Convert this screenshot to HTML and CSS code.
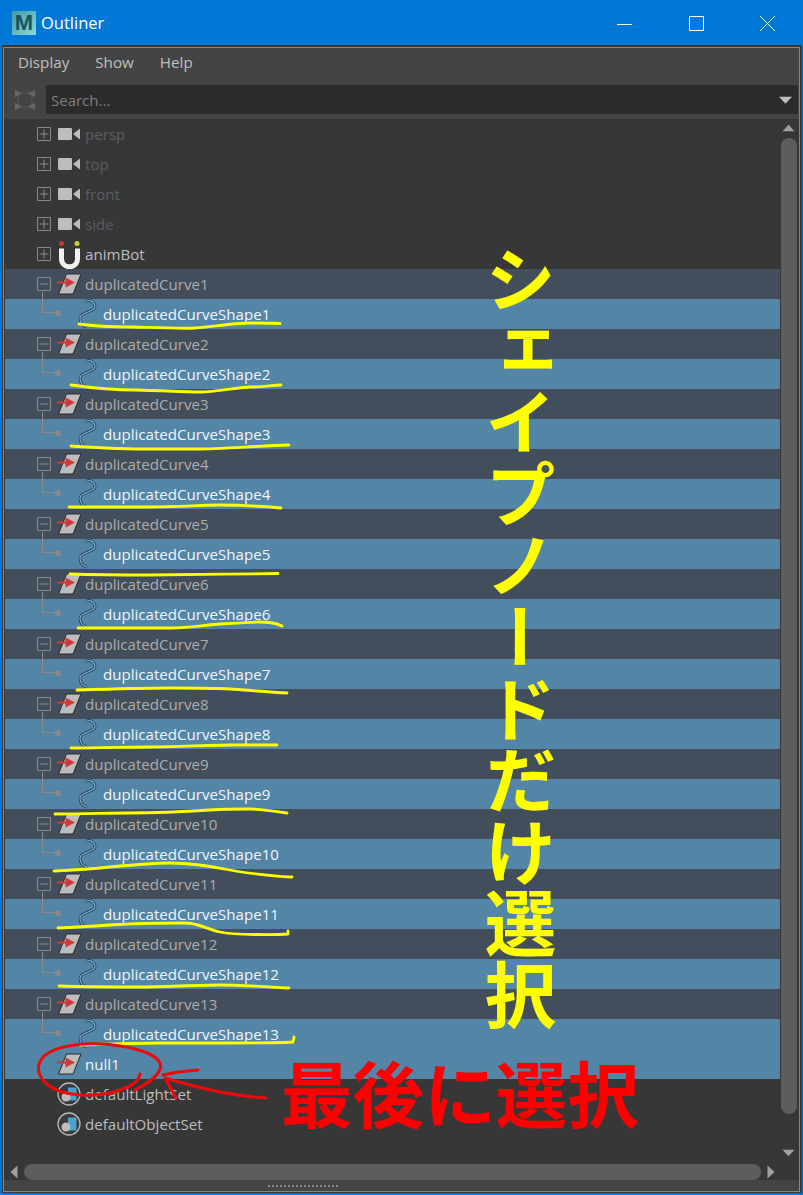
FILE: index.html
```html
<!DOCTYPE html>
<html lang="ja">
<head>
<meta charset="utf-8">
<title>Outliner</title>
<link rel="stylesheet" href="styles.css">
</head>
<body>
<svg class="defs" width="0" height="0" aria-hidden="true">
  <symbol id="i-plus" viewBox="0 0 14 14"><path d="M.5.5h13v13H.5zM2.5 7h9M7 2.5v9" fill="none" stroke="#8a8a8a"/></symbol>
  <symbol id="i-minus" viewBox="0 0 14 14"><path d="M.5.5h13v13H.5zM2.5 7h9" fill="none" stroke="#8a8a8a"/></symbol>
  <symbol id="i-camera" viewBox="0 0 24 14"><rect x="1" y="1" width="14" height="12" rx="1.2" fill="#bdbdbd"/><path d="M16 7 23 1.5v11z" fill="#bdbdbd"/></symbol>
  <symbol id="i-magnet" viewBox="0 0 24 30"><path d="M4.500 9.500v10c0 11 16 11 16 0v-10" fill="none" stroke="#f2f2f2" stroke-width="5"/><circle cx="4.500" cy="4.500" r="2.500" fill="#c9333b"/><circle cx="20" cy="4.500" r="2.500" fill="#c8d43a"/></symbol>
  <symbol id="i-transform" viewBox="0 0 26 22"><path d="M10.500 1H25l-8 20H2.500z" fill="#bcbcbc" stroke="#2a2a2a"/><path d="M1 9.500h11" stroke="#d23838" stroke-width="2.200"/><path d="M9.500 4.500l9.500 5-9.500 5z" fill="#d23838"/></symbol>
  <symbol id="i-curve" viewBox="0 0 20 30"><g fill="none"><path d="M8 3C10 0 17 2 17 8 17 13 2 13 2 19c0 5 3 8 7 9" stroke="#2a4257" stroke-width="2.800"/><path d="M8 3C10 0 17 2 17 8 17 13 2 13 2 19c0 5 3 8 7 9" stroke="#7fb6d4" stroke-width="1.100"/></g></symbol>
  <symbol id="i-set" viewBox="0 0 24 24"><circle cx="12" cy="12" r="11" fill="#3a3a3a" stroke="#b8b8b8" stroke-width="1.300"/><path d="M11 5.500h8.500v13H11z" fill="#4ba3c9"/><circle cx="9" cy="15" r="4.500" fill="#bdbdbd"/></symbol>
</svg>

<div class="window">
  <header class="titlebar">
    <span class="logo">M</span>
    <span class="title">Outliner</span>
    <div class="controls">
      <svg class="ctl" viewBox="0 0 20 20"><path d="M2 11.500h15" stroke="#fff" fill="none"/></svg>
      <svg class="ctl" viewBox="0 0 20 20"><path d="M3.500 3.500h14v14h-14z" stroke="#fff" fill="none"/></svg>
      <svg class="ctl" viewBox="0 0 20 20"><path d="M3 3l15 15M18 3L3 18" stroke="#fff" fill="none"/></svg>
    </div>
  </header>

  <div class="frame">
    <div class="panel">
      <nav class="menubar">
        <span class="menu-item">Display</span>
        <span class="menu-item">Show</span>
        <span class="menu-item">Help</span>
      </nav>
      <div class="searchbar">
        <svg class="filter-icon" viewBox="0 0 22 22">
          <path d="M4 4h14v14H4z" fill="none" stroke="#666" stroke-dasharray="2 1.500"/>
          <path d="M1 1v7l7-3.500zM21 1l-7 3.500 7 3.500zM1 21v-7l7 3.500zM21 21l-7-3.500 7-3.500z" fill="#666"/>
        </svg>
        <div class="search-field">
          <span class="search-hint">Search...</span>
          <svg class="search-arrow" viewBox="0 0 16 10"><path d="M1 1.500h14L8 9z" fill="#bdbdbd"/></svg>
        </div>
      </div>

      <div class="list-area">
        <div class="rows">
          <div class="row"><svg class="toggle"><use href="#i-plus"/></svg><svg class="icon icon-cam"><use href="#i-camera"/></svg><span class="label dim">persp</span></div>
          <div class="row"><svg class="toggle"><use href="#i-plus"/></svg><svg class="icon icon-cam"><use href="#i-camera"/></svg><span class="label dim">top</span></div>
          <div class="row"><svg class="toggle"><use href="#i-plus"/></svg><svg class="icon icon-cam"><use href="#i-camera"/></svg><span class="label dim">front</span></div>
          <div class="row"><svg class="toggle"><use href="#i-plus"/></svg><svg class="icon icon-cam"><use href="#i-camera"/></svg><span class="label dim">side</span></div>
          <div class="row"><svg class="toggle"><use href="#i-plus"/></svg><svg class="icon icon-tall"><use href="#i-magnet"/></svg><span class="label">animBot</span></div>

          <div class="row parent"><svg class="toggle"><use href="#i-minus"/></svg><svg class="icon icon-xf"><use href="#i-transform"/></svg><span class="label">duplicatedCurve1</span></div>
          <div class="row child"><i class="branch"></i><svg class="icon-curve"><use href="#i-curve"/></svg><span class="label">duplicatedCurveShape1</span></div>
          <div class="row parent"><svg class="toggle"><use href="#i-minus"/></svg><svg class="icon icon-xf"><use href="#i-transform"/></svg><span class="label">duplicatedCurve2</span></div>
          <div class="row child"><i class="branch"></i><svg class="icon-curve"><use href="#i-curve"/></svg><span class="label">duplicatedCurveShape2</span></div>
          <div class="row parent"><svg class="toggle"><use href="#i-minus"/></svg><svg class="icon icon-xf"><use href="#i-transform"/></svg><span class="label">duplicatedCurve3</span></div>
          <div class="row child"><i class="branch"></i><svg class="icon-curve"><use href="#i-curve"/></svg><span class="label">duplicatedCurveShape3</span></div>
          <div class="row parent"><svg class="toggle"><use href="#i-minus"/></svg><svg class="icon icon-xf"><use href="#i-transform"/></svg><span class="label">duplicatedCurve4</span></div>
          <div class="row child"><i class="branch"></i><svg class="icon-curve"><use href="#i-curve"/></svg><span class="label">duplicatedCurveShape4</span></div>
          <div class="row parent"><svg class="toggle"><use href="#i-minus"/></svg><svg class="icon icon-xf"><use href="#i-transform"/></svg><span class="label">duplicatedCurve5</span></div>
          <div class="row child"><i class="branch"></i><svg class="icon-curve"><use href="#i-curve"/></svg><span class="label">duplicatedCurveShape5</span></div>
          <div class="row parent"><svg class="toggle"><use href="#i-minus"/></svg><svg class="icon icon-xf"><use href="#i-transform"/></svg><span class="label">duplicatedCurve6</span></div>
          <div class="row child"><i class="branch"></i><svg class="icon-curve"><use href="#i-curve"/></svg><span class="label">duplicatedCurveShape6</span></div>
          <div class="row parent"><svg class="toggle"><use href="#i-minus"/></svg><svg class="icon icon-xf"><use href="#i-transform"/></svg><span class="label">duplicatedCurve7</span></div>
          <div class="row child"><i class="branch"></i><svg class="icon-curve"><use href="#i-curve"/></svg><span class="label">duplicatedCurveShape7</span></div>
          <div class="row parent"><svg class="toggle"><use href="#i-minus"/></svg><svg class="icon icon-xf"><use href="#i-transform"/></svg><span class="label">duplicatedCurve8</span></div>
          <div class="row child"><i class="branch"></i><svg class="icon-curve"><use href="#i-curve"/></svg><span class="label">duplicatedCurveShape8</span></div>
          <div class="row parent"><svg class="toggle"><use href="#i-minus"/></svg><svg class="icon icon-xf"><use href="#i-transform"/></svg><span class="label">duplicatedCurve9</span></div>
          <div class="row child"><i class="branch"></i><svg class="icon-curve"><use href="#i-curve"/></svg><span class="label">duplicatedCurveShape9</span></div>
          <div class="row parent"><svg class="toggle"><use href="#i-minus"/></svg><svg class="icon icon-xf"><use href="#i-transform"/></svg><span class="label">duplicatedCurve10</span></div>
          <div class="row child"><i class="branch"></i><svg class="icon-curve"><use href="#i-curve"/></svg><span class="label">duplicatedCurveShape10</span></div>
          <div class="row parent"><svg class="toggle"><use href="#i-minus"/></svg><svg class="icon icon-xf"><use href="#i-transform"/></svg><span class="label">duplicatedCurve11</span></div>
          <div class="row child"><i class="branch"></i><svg class="icon-curve"><use href="#i-curve"/></svg><span class="label">duplicatedCurveShape11</span></div>
          <div class="row parent"><svg class="toggle"><use href="#i-minus"/></svg><svg class="icon icon-xf"><use href="#i-transform"/></svg><span class="label">duplicatedCurve12</span></div>
          <div class="row child"><i class="branch"></i><svg class="icon-curve"><use href="#i-curve"/></svg><span class="label">duplicatedCurveShape12</span></div>
          <div class="row parent"><svg class="toggle"><use href="#i-minus"/></svg><svg class="icon icon-xf"><use href="#i-transform"/></svg><span class="label">duplicatedCurve13</span></div>
          <div class="row child"><i class="branch"></i><svg class="icon-curve"><use href="#i-curve"/></svg><span class="label">duplicatedCurveShape13</span></div>

          <div class="row selected"><span class="toggle"></span><svg class="icon icon-xf"><use href="#i-transform"/></svg><span class="label">null1</span></div>
          <div class="row"><span class="toggle"></span><svg class="icon icon-set"><use href="#i-set"/></svg><span class="label">defaultLightSet</span></div>
          <div class="row"><span class="toggle"></span><svg class="icon icon-set"><use href="#i-set"/></svg><span class="label">defaultObjectSet</span></div>
        </div>
        <div class="vscroll">
          <svg class="arrow-v" viewBox="0 0 14 8"><path d="M7 .5 13.500 7.500H.5z" fill="#a0a0a0"/></svg>
          <div class="vthumb"></div>
          <svg class="arrow-v arrow-down" viewBox="0 0 14 8"><path d="M.5.5h13L7 7.500z" fill="#a0a0a0"/></svg>
        </div>
      </div>

      <div class="hscroll">
        <svg class="arrow-h" viewBox="0 0 8 14"><path d="M7.500.5v13L.5 7z" fill="#a0a0a0"/></svg>
        <div class="hthumb"></div>
        <svg class="arrow-h" viewBox="0 0 8 14"><path d="M.5.5v13L7.500 7z" fill="#a0a0a0"/></svg>
      </div>
      <div class="gripbar"><i class="grip"></i></div>
    </div>
  </div>

  <div class="annotation-layer">
    <svg class="ink" viewBox="0 0 803 1195">
      <g class="ink-yellow">
        <path d="M79 324C100 327 120 327 130 327S180 329 195 328 235 323 250 323 275 323 280 323.500"/>
        <path d="M71 385C100 389 120 390 135 390S185 392 200 392 240 387 250 387 275 385 281 385"/>
        <path d="M71 446C100 448 120 449 140 449S185 449 200 449 260 446 289 445"/>
        <path d="M69 507C100 507 120 507 150 507S200 505 220 505 270 507 281 508"/>
        <path d="M70 574C100 575 130 575 150 575S240 574 278 573.500"/>
        <path d="M78 628C110 628 150 628 170 628S205 625 220 624 250 622 260 622 278 624 282 626"/>
        <path d="M77 690C110 689 150 688 170 688S215 688 230 689 270 692 287 693"/>
        <path d="M71 748C100 748 130 747 150 747S215 745 230 745 265 745 277 745"/>
        <path d="M55 814C85 814 110 813 130 813S195 811 210 810 240 809 250 809 280 812 287 813"/>
        <path d="M54 871C75 870 90 869 100 868S150 863 170 863 215 867 230 870 280 877 292 877"/>
        <path d="M58 928C80 927 95 926 110 925S170 923 185 923 205 929 220 932 275 935 288 934L288 931"/>
        <path d="M59 986C90 987 120 987 140 987S200 985 220 985 270 987 289 988"/>
        <path d="M80 1045C110 1044 140 1043 160 1043S215 1043 230 1043 280 1043 293 1042L294 1037"/>
      </g>
      <g class="ink-red">
        <path d="M140 1074C138 1084 128 1088 110 1093 90 1097 62 1096 48 1085 36 1075 36 1065 44 1056 56 1046 80 1043 100 1044 125 1045 150 1051 158 1060 165 1068 158 1078 135 1090"/>
        <path d="M266 1098C230 1096 195 1087 165 1078M165 1078 176 1098M163 1075C175 1072 185 1071 198 1070"/>
      </g>
    </svg>
    <div class="note-yellow">シェイプノードだけ選択</div>
    <div class="note-red">最後に選択</div>
  </div>
</div>
</body>
</html>
```

FILE: styles.css
```css
* { box-sizing: border-box; }
html, body { margin: 0; padding: 0; }
body {
  width: 803px;
  height: 1195px;
  overflow: hidden;
  font-family: "Open Sans", "Noto Sans", "Liberation Sans", sans-serif;
}
.defs { position: absolute; }

.window {
  position: relative;
  width: 803px;
  height: 1195px;
  display: flex;
  flex-direction: column;
  background: #0078d7;
  padding: 0 1px 2px 2px;
}

/* title bar */
.titlebar {
  height: 45px;
  flex: none;
  display: flex;
  align-items: center;
  padding-left: 10px;
  color: #fff;
}
.logo {
  width: 24px;
  height: 24px;
  background: linear-gradient(135deg, #3f9aa5, #8fd8d8);
  color: #14555f;
  font: 700 22px/24px "Liberation Sans", sans-serif;
  text-align: center;
  margin-right: 5px;
}
.title { font-size: 16.500px; line-height: 24px; }
.controls {
  margin-left: auto;
  display: flex;
  gap: 51px;
  padding-right: 25px;
}
.ctl { width: 20px; height: 20px; display: block; }

/* frame */
.frame {
  flex: 1;
  min-height: 0;
  background: #3a3a3a;
  padding: 2px 2px 1px 1px;
  display: flex;
}
.panel {
  flex: 1;
  min-width: 0;
  border: 1px solid #858585;
  background: #444;
  display: flex;
  flex-direction: column;
}

.menubar {
  height: 37px;
  flex: none;
  display: flex;
  align-items: center;
  padding: 0 0 9px 14px;
  gap: 26px;
  font-size: 15.200px;
  color: #c0c0c0;
}
.searchbar {
  height: 34px;
  flex: none;
  display: flex;
  padding: 0 1px 5px 10px;
}
.filter-icon { width: 22px; height: 22px; margin: 4px 10px 0 0; flex: none; }
.search-field {
  flex: 1;
  background: #2b2b2b;
  border-radius: 2px;
  display: flex;
  align-items: center;
  justify-content: space-between;
  padding: 0 5px 0 5px;
}
.search-hint { font-size: 15px; color: #7e7e7e; }
.search-arrow { width: 15px; height: 10px; }

/* list */
.list-area {
  flex: 1;
  min-height: 0;
  display: flex;
  background: #373737;
}
.rows { flex: 1; min-width: 0; padding-left: 1px; }
.row {
  position: relative;
  height: 30px;
  display: flex;
  align-items: center;
  font-size: 15.100px;
  padding-left: 32px;
}
.label { color: #bdbdbd; white-space: nowrap; }
.dim { color: #595d62; }
.parent { background: #434e5c; }
.parent .label { color: #acacac; }
.child { background: #5285a6; padding-left: 73px; }
.child .label, .selected .label { color: #f2f6fa; }
.selected { background: #5285a6; }

.toggle { width: 14px; height: 14px; flex: none; margin-right: 6px; }
.icon { flex: none; margin-right: 4px; width: 24px; height: 24px; }
.icon-cam { height: 14px; }
.icon-tall { height: 30px; }
.icon-xf { width: 26px; height: 22px; margin: 0 3px 0 -1px; }
.icon-curve { width: 20px; height: 30px; flex: none; margin-right: 5px; }
.branch {
  position: absolute;
  left: 37px;
  top: -7px;
  width: 15px;
  height: 21px;
  border-left: 1px solid #8a8a8a;
  border-bottom: 1px solid #8a8a8a;
}
.branch::after {
  content: "";
  position: absolute;
  right: -4px;
  bottom: -3.500px;
  width: 6px;
  height: 6px;
  border-radius: 50%;
  background: #8a8a8a;
}

/* scrollbars */
.vscroll {
  width: 19px;
  flex: none;
  display: flex;
  flex-direction: column;
  align-items: center;
  padding: 5px 2px 0 0;
}
.arrow-v { width: 13px; height: 8px; flex: none; }
.arrow-down { margin-top: 35px; }
.vthumb {
  flex: none;
  width: 16px;
  height: 976px;
  margin-top: 6px;
  background: #5d5d5d;
  border-radius: 8px;
}
.hscroll {
  height: 20px;
  flex: none;
  background: #373737;
  display: flex;
  align-items: flex-start;
  padding: 0 24px 0 6px;
  gap: 6px;
}
.arrow-h { width: 8px; height: 14px; flex: none; margin-top: 5px; }
.hthumb {
  flex: 1;
  height: 16px;
  margin-top: 4px;
  background: #5d5d5d;
  border-radius: 8px;
}
.gripbar {
  height: 11px;
  flex: none;
  display: flex;
  align-items: center;
  padding-left: 264px;
}
.grip {
  width: 72px;
  height: 2px;
  background: repeating-linear-gradient(90deg, #8a8a8a 0 2px, transparent 2px 4px);
}

/* hand-drawn notes on top of the window */
.annotation-layer {
  position: absolute;
  inset: 0;
  pointer-events: none;
}
.ink { position: absolute; inset: 0; width: 803px; height: 1195px; }
.ink path { fill: none; stroke-linecap: round; stroke-linejoin: round; }
.ink-yellow path { stroke: #ffff00; stroke-width: 2.800; }
.ink-red path { stroke: #ee0a0a; stroke-width: 3; }
.note-yellow, .note-red {
  position: absolute;
  font-family: "Noto Sans CJK JP", sans-serif;
  font-weight: 700;
  line-height: 1;
  white-space: nowrap;
}
.note-yellow {
  left: 484px;
  top: 243px;
  font-size: 71.600px;
  writing-mode: vertical-rl;
  color: #ffff00;
}
.note-red {
  left: 281px;
  top: 1056px;
  font-size: 71.600px;
  color: #ff0000;
}
```
